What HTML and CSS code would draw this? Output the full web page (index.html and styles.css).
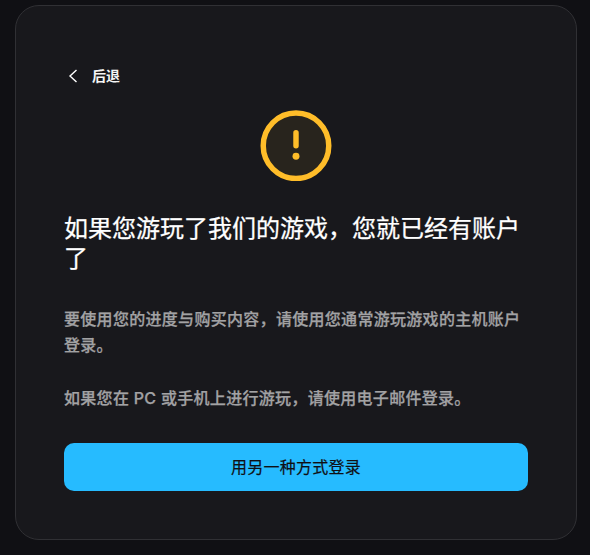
FILE: index.html
```html
<!DOCTYPE html>
<html lang="zh-CN">
<head>
<meta charset="utf-8">
<title>登录</title>
<link rel="stylesheet" href="styles.css">
</head>
<body>
<main class="card">
  <a class="back">
    <svg class="chevron" viewBox="0 0 16 16" width="16" height="16"><path d="M11.500 2 5 8l6.500 6"/></svg>
    <span>后退</span>
  </a>
  <svg class="alert" viewBox="0 0 72 72" width="72" height="72">
    <circle cx="36" cy="36" r="33"/>
    <path d="M36 23v13"/>
    <circle class="dot" cx="36" cy="46.500" r="3.500"/>
  </svg>
  <h1 class="title">如果您游玩了我们的游戏，您就已经有账户了</h1>
  <p class="text">要使用您的进度与购买内容，请使用您通常游玩游戏的主机账户登录。</p>
  <p class="text">如果您在 PC 或手机上进行游玩，请使用电子邮件登录。</p>
  <button class="button">用另一种方式登录</button>
</main>
</body>
</html>
```
FILE: styles.css
```css
* { box-sizing: border-box; }
body {
  margin: 0;
  height: 555px;
  overflow: hidden;
  padding: 5px 13px 15px 15px;
  background: #101014;
  color: #fff;
  font-family: Inter, "Noto Sans CJK SC", sans-serif;
}
.card {
  display: flex;
  flex-direction: column;
  height: 535px;
  padding: 58px 48px 48px;
  border: 1px solid #303034;
  border-radius: 24px;
  background: #18181c;
}
.back {
  display: flex;
  align-items: center;
  gap: 11px;
  height: 24px;
  padding-left: 1px;
  font-size: 14px;
  line-height: 20px;
  font-weight: 700;
  color: #f5f5f5;
}
.chevron { fill: none; stroke: #fff; stroke-width: 1.4; }
.alert {
  align-self: center;
  margin-top: 22px;
  fill: #28241d;
  stroke: #ffbd29;
  stroke-width: 5.500;
  stroke-linecap: round;
}
.dot { fill: #ffbd29; stroke: none; }
.title {
  margin: 33px 0 32px;
  font-size: 24px;
  line-height: 30px;
  font-weight: 400;
  -webkit-text-stroke: .25px currentColor;
}
.text {
  margin: 0 0 27px;
  color: #a2a2a4;
  font-size: 16px;
  line-height: 26px;
  font-weight: 500;
  letter-spacing: .3px;
  -webkit-text-stroke: .25px currentColor;
}
.button {
  height: 48px;
  margin-top: 5px;
  padding: 0 0 2px;
  border: 0;
  border-radius: 10px;
  background: #26bbff;
  color: #101014;
  font: 400 16px Inter, "Noto Sans CJK SC", sans-serif;
  letter-spacing: .25px;
  -webkit-text-stroke: .2px currentColor;
}
```
